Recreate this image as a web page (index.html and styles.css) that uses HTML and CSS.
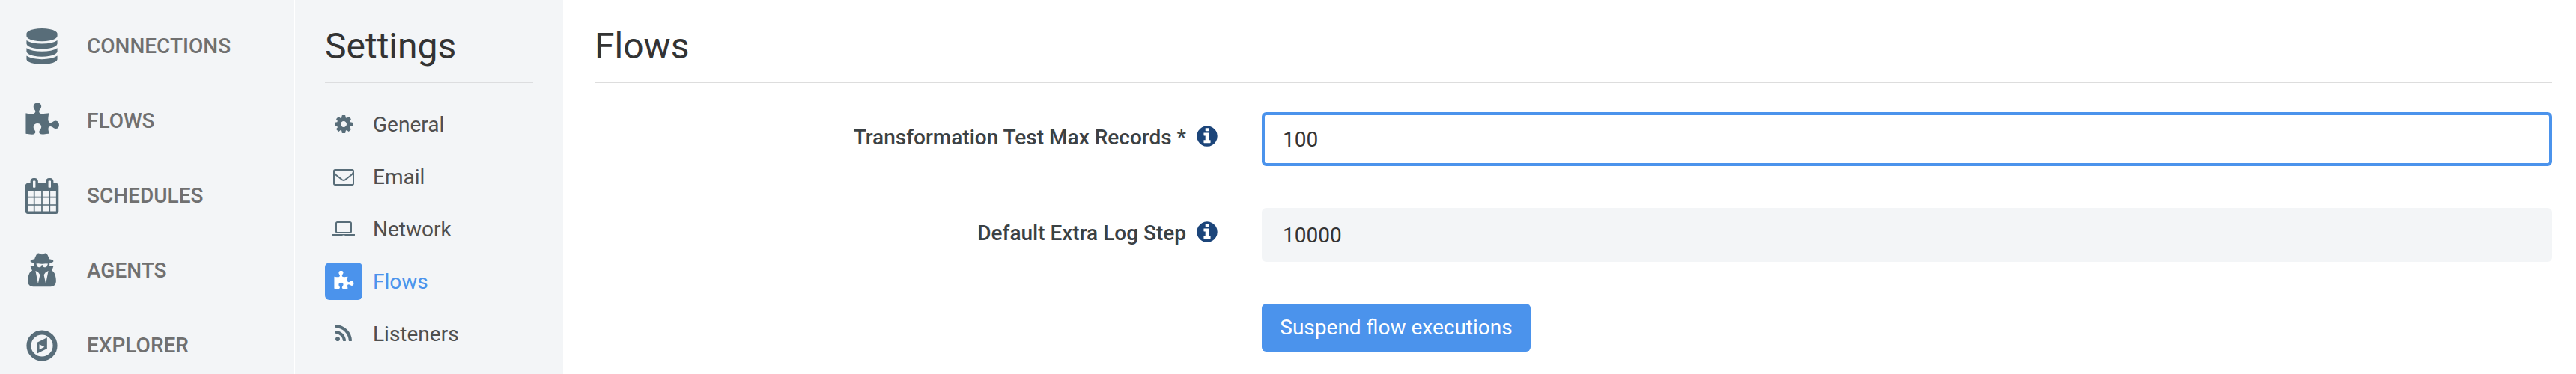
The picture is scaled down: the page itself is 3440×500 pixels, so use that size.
FILE: index.html
```
<!DOCTYPE html>
<html lang="en">
<head>
  <meta charset="UTF-8">
  <meta name="viewport" content="width=device-width, initial-scale=1">
  <title>Settings - Flows</title>
  <link rel="stylesheet" href="styles.css">
</head>
<body>
  <!-- shared icon shapes -->
  <svg class="sprite" aria-hidden="true">
    <symbol id="puzzle" viewBox="0 0 1792 1792">
      <path d="M1755 1083q0 81-44.5 135t-123.5 54q-41 0-77.5-17.5t-59-38-56.5-38-71-17.5q-110 0-110 124 0 39 16 115t15 115v5q-22 0-33 1-34 3-97.5 11.5t-115.5 13.5-98 5q-61 0-103-26.5t-42-83.5q0-37 17.5-71t38-56.5 38-59 17.5-77.5q0-79-54-123.5t-135-44.5q-84 0-143 45.5t-59 127.5q0 43 15 83t33.5 64.5 33.5 53 15 50.5q0 45-46 89-37 35-117 35-95 0-245-24-9-2-27.5-4t-27.5-4l-13-2q-1 0-3-1-2 0-2-1v-1024q2 1 17.5 3.5t34 5 21.5 3.5q150 24 245 24 80 0 117-35 46-44 46-89 0-22-15-50.5t-33.5-53-33.5-64.5-15-83q0-82 59-127.5t144-45.5q80 0 134 44.5t54 123.5q0 41-17.5 77.5t-38 59-38 56.5-17.5 71q0 57 42 83.5t103 26.5q64 0 180-15t163-17v2q-1 2-3.5 17.5t-5 34-3.5 21.5q-24 150-24 245 0 80 35 117 44 46 89 46 22 0 50.5-15t53-33.5 64.5-33.5 83-15q82 0 127.5 59t45.5 143z"/>
    </symbol>
    <symbol id="info" viewBox="0 0 1792 1792">
      <path d="M1152 1376v-160q0-14-9-23t-23-9h-96v-512q0-14-9-23t-23-9h-320q-14 0-23 9t-9 23v160q0 14 9 23t23 9h96v320h-96q-14 0-23 9t-9 23v160q0 14 9 23t23 9h448q14 0 23-9t9-23zm-128-896v-160q0-14-9-23t-23-9h-192q-14 0-23 9t-9 23v160q0 14 9 23t23 9h192q14 0 23-9t9-23zm640 416q0 209-103 385.5t-279.5 279.5-385.5 103-385.5-103-279.5-279.5-103-385.5 103-385.5 279.5-279.5 385.5-103 385.5 103 279.5 279.5 103 385.5z"/>
    </symbol>
  </svg>

  <div class="app">
    <nav class="sidebar">
      <a class="nav-item">
        <svg class="nav-icon" viewBox="0 0 1792 1792"><path d="M896 768q237 0 443-43t325-127v170q0 69-103 128t-280 93.5-385 34.5-385-34.5-280-93.5-103-128v-170q119 84 325 127t443 43zm0 768q237 0 443-43t325-127v170q0 69-103 128t-280 93.5-385 34.5-385-34.5-280-93.5-103-128v-170q119 84 325 127t443 43zm0-384q237 0 443-43t325-127v170q0 69-103 128t-280 93.5-385 34.5-385-34.5-280-93.5-103-128v-170q119 84 325 127t443 43zm0-1152q208 0 385 34.5t280 93.5 103 128v128q0 69-103 128t-280 93.5-385 34.5-385-34.5-280-93.5-103-128v-128q0-69 103-128t280-93.5 385-34.5z"/></svg>
        <span>CONNECTIONS</span>
      </a>
      <a class="nav-item">
        <svg class="nav-icon"><use href="#puzzle"/></svg>
        <span>FLOWS</span>
      </a>
      <a class="nav-item">
        <svg class="nav-icon" viewBox="0 0 1792 1792"><path d="M192 1664h288v-288h-288v288zm352 0h320v-288h-320v288zm-352-352h288v-320h-288v320zm352 0h320v-320h-320v320zm-352-384h288v-288h-288v288zm736 736h320v-288h-320v288zm-384-736h320v-288h-320v288zm768 736h288v-288h-288v288zm-384-352h320v-320h-320v320zm-352-864v-288q0-13-9.5-22.5t-22.5-9.5h-64q-13 0-22.5 9.5t-9.5 22.5v288q0 13 9.5 22.5t22.5 9.5h64q13 0 22.5-9.5t9.5-22.5zm736 864h288v-320h-288v320zm-384-384h320v-288h-320v288zm384 0h288v-288h-288v288zm32-480v-288q0-13-9.5-22.5t-22.5-9.5h-64q-13 0-22.5 9.5t-9.5 22.5v288q0 13 9.5 22.5t22.5 9.5h64q13 0 22.5-9.5t9.5-22.5zm384-64v1280q0 52-38 90t-90 38h-1408q-52 0-90-38t-38-90v-1280q0-52 38-90t90-38h128v-96q0-66 47-113t113-47h64q66 0 113 47t47 113v96h384v-96q0-66 47-113t113-47h64q66 0 113 47t47 113v96h128q52 0 90 38t38 90z"/></svg>
        <span>SCHEDULES</span>
      </a>
      <a class="nav-item">
        <svg class="nav-icon" viewBox="0 0 1792 1792"><path d="M704 1536l96-448-96-128-128-64zm384 0l128-640-128 64-96 128zm104-988q-2-4-4-6-10-8-96-8-70 0-167 19-7 2-21 2t-21-2q-97-19-167-19-86 0-96 8-2 2-4 6 2 18 4 27 2 3 7.5 6.5t7.5 10.5q2 4 7.5 20.5t7 20.5 7.5 17 8.5 17 9 14 12 13.5 14 9.5 17.5 8 20.5 4 24.5 2q36 0 59-12.5t32.5-30 14.5-34.5 11.5-29.5 17.5-12.5h12q11 0 17.5 12.5t11.5 29.5 14.5 34.5 32.5 30 59 12.5q13 0 24.5-2t20.5-4 17.5-8 14-9.5 12-13.5 9-14 8.5-17 7.5-17 7-20.5 7.5-20.5q2-7 7.5-10.5t7.5-6.5q2-9 4-27zm408 879q0 121-73 190t-194 69h-874q-121 0-194-69t-73-190q0-61 4.5-118t19-125.5 37.5-123.5 63.5-103.5 93.5-74.5l-90-220h214q-22-64-22-128 0-12 2-32-194-40-194-96 0-57 210-99 17-62 51.5-134t70.5-114q32-37 76-37 30 0 84 31t84 31 84-31 84-31q44 0 76 37 36 42 70.5 114t51.5 134q210 42 210 99 0 56-194 96 7 81-20 160h214l-82 225q63 33 107.5 96.5t65.5 143.5 29 151.5 8 148.5z"/></svg>
        <span>AGENTS</span>
      </a>
      <a class="nav-item">
        <svg class="nav-icon" viewBox="0 0 1792 1792">
          <circle class="ring" cx="896" cy="896" r="656"/>
          <path fill-rule="evenodd" d="M768 1089l256-129-256-128zM1152 495v546l-512 256v-546z"/>
        </svg>
        <span>EXPLORER</span>
      </a>
    </nav>

    <aside class="settings">
      <h2>Settings</h2>
      <a class="menu-item">
        <span class="tile"><svg viewBox="0 0 1792 1792"><path d="M1152 896q0-106-75-181t-181-75-181 75-75 181 75 181 181 75 181-75 75-181zm512-109v222q0 12-8 23t-20 13l-185 28q-19 54-39 91 35 50 107 138 10 12 10 25t-9 23q-27 37-99 108t-94 71q-12 0-26-9l-138-108q-44 23-91 38-16 136-29 186-7 28-36 28h-222q-14 0-24.5-8.5t-11.5-21.5l-28-184q-49-16-90-37l-141 107q-10 9-25 9-14 0-25-11-126-114-165-168-7-10-7-23 0-12 8-23 15-21 51-66.5t54-70.5q-27-50-41-99l-183-27q-13-2-21-12.5t-8-23.5v-222q0-12 8-23t19-13l186-28q14-46 39-92-40-57-107-138-10-12-10-24 0-10 9-23 26-36 98.5-107.5t94.5-71.5q13 0 26 10l138 107q44-23 91-38 16-136 29-186 7-28 36-28h222q14 0 24.5 8.5t11.5 21.5l28 184q49 16 90 37l142-107q9-9 24-9 13 0 25 10 129 119 165 170 7 8 7 22 0 12-8 23-15 21-51 66.5t-54 70.5q26 50 41 98l183 28q13 2 21 12.5t8 23.5z"/></svg></span>
        General
      </a>
      <a class="menu-item">
        <span class="tile"><svg viewBox="0 0 1792 1792"><path d="M1664 1504v-768q-32 36-69 66-268 206-426 338-51 43-83 67t-86.5 48.5-102.5 24.5h-2q-48 0-102.5-24.5t-86.5-48.5-83-67q-158-132-426-338-37-30-69-66v768q0 13 9.5 22.5t22.5 9.5h1472q13 0 22.5-9.5t9.5-22.5zm0-1051v-24.5l-.5-13-3-12.5-5.5-9-9-7.5-14-2.5h-1472q-13 0-22.5 9.5t-9.5 22.5q0 168 147 284 193 152 401 317 6 5 35 29.5t46 37.5 44.5 31.5 50.5 27.5 43 9h2q20 0 43-9t50.5-27.5 44.5-31.5 46-37.5 35-29.5q208-165 401-317 54-43 100.5-115.5t46.5-131.5zm128-37v1088q0 66-47 113t-113 47h-1472q-66 0-113-47t-47-113v-1088q0-66 47-113t113-47h1472q66 0 113 47t47 113z"/></svg></span>
        Email
      </a>
      <a class="menu-item">
        <span class="tile"><svg class="wide" viewBox="0 0 1920 1792"><path d="M416 1280q-66 0-113-47t-47-113v-704q0-66 47-113t113-47h1088q66 0 113 47t47 113v704q0 66-47 113t-113 47h-1088zm-32-864v704q0 13 9.5 22.5t22.5 9.5h1088q13 0 22.5-9.5t9.5-22.5v-704q0-13-9.5-22.5t-22.5-9.5h-1088q-13 0-22.5 9.5t-9.5 22.5zm1376 928h160v96q0 40-47 68t-113 28h-1600q-66 0-113-28t-47-68v-96h1760zm-720 96q16 0 16-16t-16-16h-160q-16 0-16 16t16 16h160z"/></svg></span>
        Network
      </a>
      <a class="menu-item active">
        <span class="tile"><svg><use href="#puzzle"/></svg></span>
        Flows
      </a>
      <a class="menu-item">
        <span class="tile"><svg viewBox="0 0 1792 1792"><path d="M576 1344q0 80-56 136t-136 56-136-56-56-136 56-136 136-56 136 56 56 136zm512 123q2 28-17 48-18 21-47 21h-135q-25 0-43-16.5t-20-41.5q-22-229-184.5-391.5t-391.5-184.5q-25-2-41.5-20t-16.5-43v-135q0-29 21-47 17-17 43-17h5q160 13 306 80.5t259 181.5q114 113 181.5 259t80.5 306zm512 2q2 27-18 47-18 20-46 20h-143q-26 0-44.5-17.5t-19.5-42.5q-12-215-101-408.5t-231.5-336-336-231.5-408.5-102q-25-1-42.5-19.5t-17.5-43.5v-143q0-28 20-46 18-18 44-18h3q262 13 501.5 120t425.5 294q187 186 294 425.5t120 501.5z"/></svg></span>
        Listeners
      </a>
    </aside>

    <main class="content">
      <h2>Flows</h2>
      <form class="form">
        <label for="max-records">Transformation Test Max Records * <svg class="info"><use href="#info"/></svg></label>
        <input class="focused" id="max-records" type="text" value="100">

        <label for="log-step">Default Extra Log Step <svg class="info"><use href="#info"/></svg></label>
        <input id="log-step" type="text" value="10000">

        <button type="button">Suspend flow executions</button>
      </form>
    </main>
  </div>
</body>
</html>
```
FILE: styles.css
```
* {
  box-sizing: border-box;
}
body {
  margin: 0;
  font-family: Roboto, sans-serif;
  font-size: 28px;
  color: #333;
  background: #fff;
  overflow: hidden;
}
svg {
  display: block;
  fill: #586d79;
}
.sprite {
  display: none;
}
.app {
  display: flex;
  height: 500px;
}
h2 {
  margin: 0 0 30px;
  height: 111px;
  padding-top: 33px;
  font-size: 48px;
  font-weight: 400;
  line-height: 57px;
  border-bottom: 2px solid #dcdddf;
}

/* Left navigation */
.sidebar {
  flex: none;
  width: 394px;
  padding-top: 12px;
  background: #f3f5f7;
  border-right: 2px solid #fff;
}
.nav-item {
  display: flex;
  align-items: center;
  gap: 36px;
  height: 100px;
  padding-left: 32px;
  font-weight: 500;
  color: #707070;
}
.nav-item span {
  padding-bottom: 1px;
}
.nav-icon {
  width: 48px;
  height: 48px;
}
.ring {
  fill: none;
  stroke: #586d79;
  stroke-width: 224;
}

/* Settings menu */
.settings {
  flex: none;
  width: 358px;
  padding: 0 40px;
  background: #f3f5f7;
}
.menu-item {
  display: flex;
  align-items: center;
  gap: 14px;
  height: 50px;
  margin-bottom: 20px;
  color: #4f4f4f;
}
.tile {
  display: flex;
  align-items: center;
  justify-content: center;
  width: 50px;
  height: 50px;
  border-radius: 6px;
}
.tile svg {
  width: 28px;
  height: 28px;
}
.tile .wide {
  width: 30px;
}
.active {
  color: #4b93ec;
}
.active .tile {
  background: #4b93ec;
}
.active svg {
  fill: #fff;
}

/* Form */
.content {
  flex: 1;
  padding: 0 32px 0 42px;
}
.content h2 {
  margin-bottom: 39px;
  border-color: #ddd;
}
.form {
  display: grid;
  grid-template-columns: 834px 1fr;
  column-gap: 57px;
  row-gap: 56px;
}
label {
  display: flex;
  align-items: center;
  justify-content: flex-end;
  gap: 12px;
  height: 67px;
  font-weight: 500;
  color: #3b4144;
}
.info {
  width: 32px;
  height: 32px;
  margin-bottom: 4px;
  fill: #1c457a;
}
input {
  width: 100%;
  height: 72px;
  padding: 0 24px;
  font: inherit;
  color: #333;
  background: #f3f5f7;
  border: 4px solid #f3f5f7;
  border-radius: 6px;
  outline: none;
}
.focused {
  background: #fff;
  border-color: #4b93ec;
}
button {
  grid-column: 2;
  justify-self: start;
  width: 359px;
  height: 64px;
  padding: 0 24px;
  font: inherit;
  line-height: 32px;
  color: #fff;
  background: #4b93ec;
  border: none;
  border-radius: 6px;
}
```
